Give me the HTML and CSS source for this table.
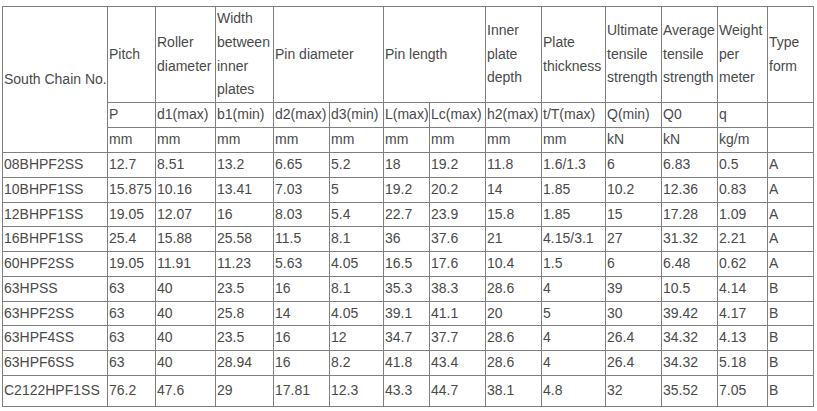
FILE: index.html
```html
<!DOCTYPE html>
<html>
<head>
<meta charset="utf-8">
<link rel="stylesheet" href="styles.css">
</head>
<body>
<div class="wrap">
<table class="spec">
<colgroup>
<col style="width:105px"><col style="width:48px"><col style="width:60px"><col style="width:58px"><col style="width:56px"><col style="width:54px"><col style="width:46px"><col style="width:56px"><col style="width:56px"><col style="width:64px"><col style="width:56px"><col style="width:56px"><col style="width:50px"><col style="width:46px">
</colgroup>
<tr class="head">
<td rowspan="3" class="name">South Chain No.</td>
<td>Pitch</td>
<td>Roller diameter</td>
<td>Width between inner plates</td>
<td colspan="2">Pin diameter</td>
<td colspan="2">Pin length</td>
<td>Inner plate depth</td>
<td>Plate thickness</td>
<td>Ultimate tensile strength</td>
<td>Average tensile strength</td>
<td>Weight per meter</td>
<td>Type form</td>
</tr>
<tr class="unit">
<td>P</td><td>d1(max)</td><td>b1(min)</td><td>d2(max)</td><td>d3(min)</td><td>L(max)</td><td>Lc(max)</td><td>h2(max)</td><td>t/T(max)</td><td>Q(min)</td><td>Q0</td><td>q</td><td></td>
</tr>
<tr class="unit">
<td>mm</td><td>mm</td><td>mm</td><td>mm</td><td>mm</td><td>mm</td><td>mm</td><td>mm</td><td>mm</td><td>kN</td><td>kN</td><td>kg/m</td><td></td>
</tr>
<tr class="row"><td>08BHPF2SS</td><td>12.7</td><td>8.51</td><td>13.2</td><td>6.65</td><td>5.2</td><td>18</td><td>19.2</td><td>11.8</td><td>1.6/1.3</td><td>6</td><td>6.83</td><td>0.5</td><td>A</td></tr>
<tr class="row"><td>10BHPF1SS</td><td>15.875</td><td>10.16</td><td>13.41</td><td>7.03</td><td>5</td><td>19.2</td><td>20.2</td><td>14</td><td>1.85</td><td>10.2</td><td>12.36</td><td>0.83</td><td>A</td></tr>
<tr class="row"><td>12BHPF1SS</td><td>19.05</td><td>12.07</td><td>16</td><td>8.03</td><td>5.4</td><td>22.7</td><td>23.9</td><td>15.8</td><td>1.85</td><td>15</td><td>17.28</td><td>1.09</td><td>A</td></tr>
<tr class="row"><td>16BHPF1SS</td><td>25.4</td><td>15.88</td><td>25.58</td><td>11.5</td><td>8.1</td><td>36</td><td>37.6</td><td>21</td><td>4.15/3.1</td><td>27</td><td>31.32</td><td>2.21</td><td>A</td></tr>
<tr class="row"><td>60HPF2SS</td><td>19.05</td><td>11.91</td><td>11.23</td><td>5.63</td><td>4.05</td><td>16.5</td><td>17.6</td><td>10.4</td><td>1.5</td><td>6</td><td>6.48</td><td>0.62</td><td>A</td></tr>
<tr class="row"><td>63HPSS</td><td>63</td><td>40</td><td>23.5</td><td>16</td><td>8.1</td><td>35.3</td><td>38.3</td><td>28.6</td><td>4</td><td>39</td><td>10.5</td><td>4.14</td><td>B</td></tr>
<tr class="row"><td>63HPF2SS</td><td>63</td><td>40</td><td>25.8</td><td>14</td><td>4.05</td><td>39.1</td><td>41.1</td><td>20</td><td>5</td><td>30</td><td>39.42</td><td>4.17</td><td>B</td></tr>
<tr class="row"><td>63HPF4SS</td><td>63</td><td>40</td><td>23.5</td><td>16</td><td>12</td><td>34.7</td><td>37.7</td><td>28.6</td><td>4</td><td>26.4</td><td>34.32</td><td>4.13</td><td>B</td></tr>
<tr class="row"><td>63HPF6SS</td><td>63</td><td>40</td><td>28.94</td><td>16</td><td>8.2</td><td>41.8</td><td>43.4</td><td>28.6</td><td>4</td><td>26.4</td><td>34.32</td><td>5.18</td><td>B</td></tr>
<tr class="last"><td>C2122HPF1SS</td><td>76.2</td><td>47.6</td><td>29</td><td>17.81</td><td>12.3</td><td>43.3</td><td>44.7</td><td>38.1</td><td>4.8</td><td>32</td><td>35.52</td><td>7.05</td><td>B</td></tr>
</table>
</div>
</body>
</html>
```

FILE: styles.css
```css
html, body {
  margin: 0;
  padding: 0;
  background: #ffffff;
}
.wrap {
  padding: 6px 0 0 2px;
}
.spec {
  border-collapse: collapse;
  table-layout: fixed;
  width: 812px;
  font-family: "Liberation Sans", Arial, sans-serif;
  font-size: 14px;
  color: #4a4a4a;
}
.spec td {
  border: 1px solid #7f7f7f;
  padding: 0 0 0 1px;
  vertical-align: middle;
  text-align: left;
  line-height: 23.75px;
  overflow: hidden;
}
.spec td.name {
  white-space: nowrap;
}
.head td {
  height: 95px;
}
.unit td {
  height: 24px;
}
.row td {
  height: 23.44px;
}
.last td {
  height: 30px;
}
```
